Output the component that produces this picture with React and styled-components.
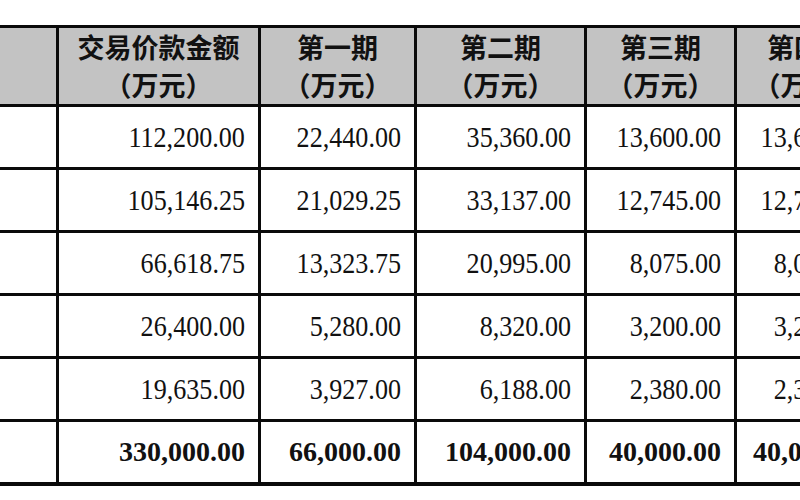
import React from "react";
import styled, { createGlobalStyle } from "styled-components";

const Global = createGlobalStyle`
  html, body { margin: 0; padding: 0; background: #fff; }
  body { width: 800px; height: 500px; overflow: hidden; }
`;

const Viewport = styled.div`
  width: 800px;
  height: 500px;
  overflow: hidden;
  background: #fff;
  padding-top: 25px;
  box-sizing: border-box;
`;

const Table = styled.table`
  border-collapse: collapse;
  table-layout: fixed;
  margin-left: -100px;
  width: 978px;
  border: 3px solid #0a0a0a;
  border-bottom-width: 4px;
`;

const HeadCell = styled.th`
  background: #c3c3c3;
  border: 3px solid #0a0a0a;
  height: 70px;
  padding: 0;
  font-family: "Noto Sans CJK SC", "Noto Sans", sans-serif;
  font-weight: 700;
  font-size: 27px;
  line-height: 38px;
  color: #111;
  text-align: center;
  vertical-align: middle;
  white-space: nowrap;
  overflow: hidden;
`;

const Cell = styled.td`
  border: 3px solid #0a0a0a;
  height: 60px;
  padding: 0 13px 0 0;
  text-align: right;
  vertical-align: middle;
  white-space: nowrap;
  overflow: hidden;
  font-family: "Liberation Serif", "Times New Roman", serif;
  color: #111;
`;

const Num = styled.span`
  display: inline-block;
  font-size: ${(p) => (p.$bold ? "28px" : "30px")};
  font-weight: ${(p) => (p.$bold ? 700 : 400)};
  transform: ${(p) => (p.$bold ? "none" : "scaleX(0.87)")};
  transform-origin: right center;
  line-height: 1;
`;

const widths = [156, 202, 156, 170, 150, 144];

const heads = ["交易价款金额", "第一期", "第二期", "第三期", "第四期"];

const rows = [
  ["112,200.00", "22,440.00", "35,360.00", "13,600.00", "13,600.00"],
  ["105,146.25", "21,029.25", "33,137.00", "12,745.00", "12,745.00"],
  ["66,618.75", "13,323.75", "20,995.00", "8,075.00", "8,075.00"],
  ["26,400.00", "5,280.00", "8,320.00", "3,200.00", "3,200.00"],
  ["19,635.00", "3,927.00", "6,188.00", "2,380.00", "2,380.00"],
];

const total = ["330,000.00", "66,000.00", "104,000.00", "40,000.00", "40,000.00"];

export default function App() {
  return (
    <>
      <Global />
      <Viewport>
        <Table>
          <colgroup>
            {widths.map((w, i) => (
              <col key={i} style={{ width: w }} />
            ))}
          </colgroup>
          <thead>
            <tr>
              <HeadCell />
              {heads.map((h) => (
                <HeadCell key={h}>
                  {h}
                  <br />
                  （万元）
                </HeadCell>
              ))}
            </tr>
          </thead>
          <tbody>
            {rows.map((r, i) => (
              <tr key={i}>
                <Cell />
                {r.map((v, j) => (
                  <Cell key={j}>
                    <Num>{v}</Num>
                  </Cell>
                ))}
              </tr>
            ))}
            <tr>
              <Cell />
              {total.map((v, j) => (
                <Cell key={j}>
                  <Num $bold>{v}</Num>
                </Cell>
              ))}
            </tr>
          </tbody>
        </Table>
      </Viewport>
    </>
  );
}
